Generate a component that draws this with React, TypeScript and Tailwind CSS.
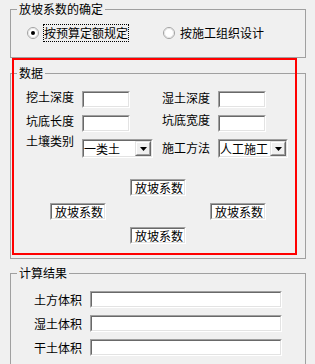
import type { ReactNode } from "react";

// Old-style Win32 dialog: slope factor settings, data inputs and results.
function Sunken({ className = "", children }: { className?: string; children?: ReactNode }) {
  return (
    <div className={`border border-t-[#a0a0a0] border-l-[#a0a0a0] border-r-white border-b-white ${className}`}>
      <div className="flex h-full w-full items-center overflow-hidden border border-t-[#696969] border-l-[#696969] border-r-[#e3e3e3] border-b-[#e3e3e3] bg-white">
        {children}
      </div>
    </div>
  );
}

function Group({ title, className = "", children }: { title: string; className?: string; children: ReactNode }) {
  return (
    <fieldset className={`ml-[10px] w-[296px] border border-[#a0a0a0] ${className}`}>
      <legend className="ml-[6px] px-[2px] text-[12px] leading-[18px]">{title}</legend>
      {children}
    </fieldset>
  );
}

function Radio({ label, checked, focused }: { label: string; checked?: boolean; focused?: boolean }) {
  return (
    <div className="flex items-center">
      <svg width="12" height="12" viewBox="0 0 12 12">
        <circle cx="6" cy="6" r="5.5" fill="#fff" stroke="#a0a0a0" />
        <circle cx="6" cy="6" r="4.5" fill="none" stroke="#e3e3e3" />
        {checked && <circle cx="6" cy="6" r="2" fill="#000" />}
      </svg>
      <span
        className={`ml-[4px] border px-0 text-[12px] leading-[16px] ${
          focused ? "border-dotted border-black" : "border-transparent"
        }`}
      >
        {label}
      </span>
    </div>
  );
}

function Combo({ value, className = "" }: { value: string; className?: string }) {
  return (
    <div className={`border border-t-[#a0a0a0] border-l-[#a0a0a0] border-r-white border-b-white ${className}`}>
      <div className="flex h-full w-full items-center border border-t-[#696969] border-l-[#696969] border-r-[#e3e3e3] border-b-[#e3e3e3] bg-white">
        <span className="flex-1 overflow-hidden whitespace-nowrap text-[12px] leading-[15px]">{value}</span>
        <div className="h-[15px] w-[16px] shrink-0 border border-t-[#e3e3e3] border-l-[#e3e3e3] border-r-[#696969] border-b-[#696969]">
          <div className="flex h-full w-full items-center justify-center border border-t-white border-l-white border-r-[#a0a0a0] border-b-[#a0a0a0] bg-[#f0f0f0]">
            <svg width="7" height="4" viewBox="0 0 7 4">
              <path d="M0 0h7L3.5 4z" fill="#000" />
            </svg>
          </div>
        </div>
      </div>
    </div>
  );
}

function Field({ label, mt = "" }: { label: string; mt?: string }) {
  return (
    <div className="flex items-start">
      <span className={`w-[56px] text-[12px] leading-[12px] ${mt}`}>{label}</span>
      <Sunken className="h-[17px] w-[48px]" />
    </div>
  );
}

function Factor() {
  return (
    <Sunken className="h-[17px] w-[56px]">
      <span className="pl-[3px] text-[12px] leading-[13px]">放坡系数</span>
    </Sunken>
  );
}

export default function App() {
  return (
    <div className="relative h-[364px] w-[315px] overflow-hidden bg-[#f0f0f0] font-['Noto_Sans_CJK_SC',sans-serif] text-black">
      <Group title="放坡系数的确定">
        <div className="flex items-center gap-[34px] pb-[15px] pl-[16px] pt-[6px]">
          <Radio label="按预算定额规定" checked focused />
          <Radio label="按施工组织设计" />
        </div>
      </Group>

      <Group title="数据" className="mt-[6px]">
        <div className="pb-[14px] pl-[15px] pt-[9px]">
          <div className="flex flex-col gap-[7px]">
            <div className="flex">
              <div className="w-[136px]">
                <Field label="挖土深度" />
              </div>
              <Field label="湿土深度" mt="mt-[1px]" />
            </div>
            <div className="flex">
              <div className="w-[136px]">
                <Field label="坑底长度" />
              </div>
              <Field label="坑底宽度" mt="-mt-[1px]" />
            </div>
            <div className="flex">
              <div className="flex w-[136px] items-start">
                <span className="-mt-[4px] w-[56px] text-[12px] leading-[12px]">土壤类别</span>
                <Combo value="一类土" className="h-[19px] w-[71px]" />
              </div>
              <div className="flex items-start">
                <span className="mt-[3px] w-[56px] text-[12px] leading-[12px]">施工方法</span>
                <Combo value="人工施工" className="h-[19px] w-[70px]" />
              </div>
            </div>
          </div>
          <div className="-ml-[15px] mt-[21px] flex flex-col items-center gap-[7px]">
            <Factor />
            <div className="flex gap-[104px]">
              <Factor />
              <Factor />
            </div>
            <Factor />
          </div>
        </div>
      </Group>

      <Group title="计算结果" className="mt-[5px]">
        <div className="flex flex-col gap-[7px] pb-[20px] pl-[23px] pt-[9px]">
          {["土方体积", "湿土体积", "干土体积"].map((l) => (
            <div key={l} className="flex items-center">
              <span className="w-[56px] text-[12px] leading-[14px]">{l}</span>
              <Sunken className="h-[17px] w-[192px]" />
            </div>
          ))}
        </div>
      </Group>

      {/* red highlight drawn over the data group */}
      <div className="pointer-events-none absolute left-[12px] top-[58px] h-[197px] w-[285px] border-2 border-[#ff0000]" />
    </div>
  );
}
